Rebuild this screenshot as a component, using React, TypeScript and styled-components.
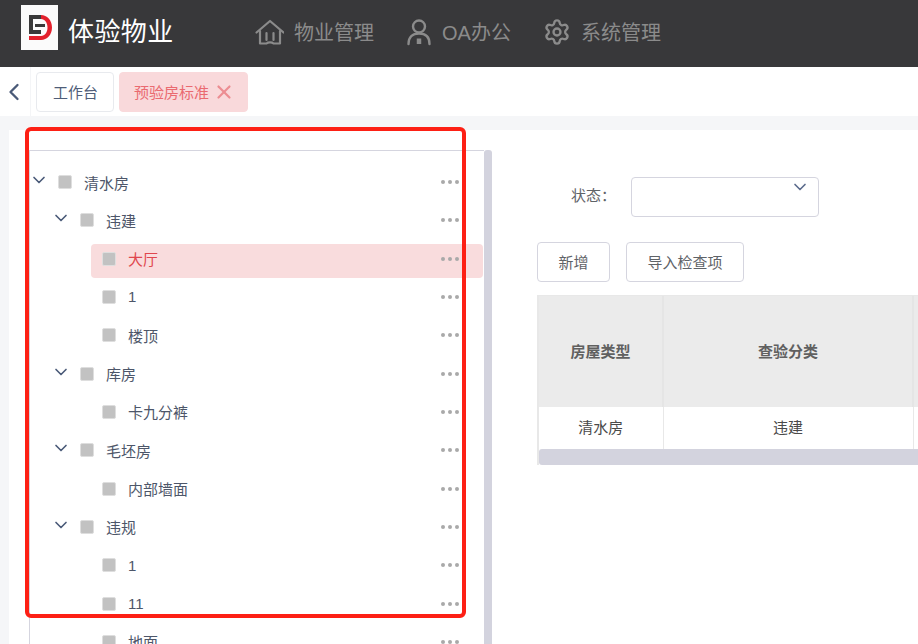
import React from 'react';
import styled, { createGlobalStyle } from 'styled-components';
import { ChevronDown, ChevronLeft, Settings, X } from 'lucide-react';

const GlobalStyle = createGlobalStyle`
  html, body {
    margin: 0;
    padding: 0;
    height: 100%;
    overflow: hidden;
    background: #fff;
    font-family: "Liberation Sans", "Noto Sans CJK SC", sans-serif;
  }
  * { box-sizing: border-box; }
`;

const treeData: TreeRow[] = [
  { label: '清水房', level: 0, open: true },
  { label: '违建', level: 1, open: true },
  { label: '大厅', level: 2, active: true },
  { label: '1', level: 2 },
  { label: '楼顶', level: 2 },
  { label: '库房', level: 1, open: true },
  { label: '卡九分裤', level: 2 },
  { label: '毛坯房', level: 1, open: true },
  { label: '内部墙面', level: 2 },
  { label: '违规', level: 1, open: true },
  { label: '1', level: 2 },
  { label: '11', level: 2 },
  { label: '地面', level: 2 },
];

const HomeIcon = () => (
  <svg width="30" height="28" viewBox="0 0 30 28" fill="none" stroke="#8b8b8b" strokeWidth="2.2" strokeLinejoin="round" strokeLinecap="round">
    <path d="M2.500 14.500 16 3l13.500 11.500" />
    <path d="M6 13v12.500h6.500c1.500-1.500 5.500-1.500 7 0H26V13" />
    <path d="M12.500 15v7M19.500 15v7" />
  </svg>
);

const UserIcon = () => (
  <svg width="26" height="28" viewBox="0 0 26 28" fill="none" stroke="#8b8b8b" strokeWidth="2.4" strokeLinecap="round">
    <circle cx="13" cy="8.500" r="6" />
    <path d="M2.500 26c0-7 4-10.500 10.500-10.500S23.500 19 23.500 26" />
    <path d="M13 20.500V26" strokeWidth="4.500" strokeLinecap="butt" />
  </svg>
);

const Logo = () => (
  <svg width="37" height="45" viewBox="0 0 37 45">
    <rect width="37" height="45" fill="#fbfbfb" />
    <path d="M8 10h12v4h-8v11h8v4H8z" fill="#3a3a3a" />
    <path d="M14 19h10v3H14z" fill="#3a3a3a" />
    <path d="M20 10c6 0 11 5 11 12.500S26 35 20 35H8v-4h12c4 0 6.500-4 6.500-8.500S24 14 20 14z" fill="#e3202c" />
  </svg>
);

const MoreDots = () => (
  <Dots>
    <i />
    <i />
    <i />
  </Dots>
);

const App = () => {
  return (
    <Page>
      <GlobalStyle />
      <Header>
        <LogoBox>
          <Logo />
        </LogoBox>
        <Brand>体验物业</Brand>
        <Nav>
          <NavItem>
            <HomeIcon />
            <span>物业管理</span>
          </NavItem>
          <NavItem>
            <UserIcon />
            <span>OA办公</span>
          </NavItem>
          <NavItem>
            <Settings size={28} color="#8b8b8b" strokeWidth={2} />
            <span>系统管理</span>
          </NavItem>
        </Nav>
      </Header>
      <TabBar>
        <BackButton>
          <ChevronLeft size={28} color="#4a5a78" strokeWidth={2} />
        </BackButton>
        <TabList>
          <Tab>工作台</Tab>
          <Tab $active>
            预验房标准
            <X size={22} color="#ec8d92" strokeWidth={2.4} />
          </Tab>
        </TabList>
      </TabBar>
      <Content>
        <Panel>
          <TreePane>
            <Tree>
              {treeData.map((row, index) => (
                <Row key={index} $level={row.level} $active={row.active}>
                  {row.open && (
                    <Caret>
                      <ChevronDown size={20} color="#4a5a78" strokeWidth={2} />
                    </Caret>
                  )}
                  <Check />
                  <RowLabel $active={row.active}>{row.label}</RowLabel>
                  <MoreDots />
                </Row>
              ))}
            </Tree>
            <TreeScroll />
          </TreePane>
          <Detail>
            <FilterRow>
              <FilterLabel>状态：</FilterLabel>
              <SelectBox>
                <ChevronDown size={20} color="#5b6b8c" strokeWidth={2} />
              </SelectBox>
            </FilterRow>
            <Actions>
              <ActionButton>新增</ActionButton>
              <ActionButton $wide>导入检查项</ActionButton>
            </Actions>
            <TableWrap>
              <Table>
                <colgroup>
                  <col width="124" />
                  <col width="250" />
                  <col />
                </colgroup>
                <thead>
                  <tr>
                    <HeadCell>房屋类型</HeadCell>
                    <HeadCell>查验分类</HeadCell>
                    <HeadCell />
                  </tr>
                </thead>
                <tbody>
                  <tr>
                    <BodyCell>清水房</BodyCell>
                    <BodyCell>违建</BodyCell>
                    <BodyCell />
                  </tr>
                </tbody>
              </Table>
              <TableScroll />
            </TableWrap>
          </Detail>
        </Panel>
      </Content>
      <Marker />
    </Page>
  );
};

export default App;

const Page = styled.div`
  position: relative;
  width: 918px;
  height: 644px;
  overflow: hidden;
  display: flex;
  flex-direction: column;
`;

const Header = styled.header`
  height: 67px;
  flex: none;
  background: #38383a;
  display: flex;
  align-items: flex-start;
  padding: 5px 0 0 21px;
`;

const LogoBox = styled.div`
  width: 37px;
  height: 45px;
  flex: none;
`;

const Brand = styled.div`
  margin: 8px 0 0 10px;
  width: 106px;
  font-size: 26px;
  line-height: 38px;
  letter-spacing: 0.4px;
  color: #fff;
  white-space: nowrap;
`;

const Nav = styled.nav`
  display: flex;
  margin: 13px 0 0 80px;
  gap: 32px;
`;

const NavItem = styled.div`
  display: flex;
  align-items: center;
  gap: 10px;
  height: 28px;
  font-size: 20px;
  color: #8b8b8b;
  white-space: nowrap;
  span {
    margin-bottom: 2px;
  }
`;

const TabBar = styled.div`
  height: 49px;
  flex: none;
  display: flex;
  background: #fff;
`;

const BackButton = styled.div`
  width: 31px;
  height: 49px;
  background: #fff;
  border-right: 1px solid #f4f5f7;
  display: flex;
  align-items: center;
`;

const TabList = styled.div`
  display: flex;
  gap: 5px;
  padding: 5px 0 0 5px;
`;

const Tab = styled.div<{ $active?: boolean }>`
  height: 40px;
  padding: ${(p) => (p.$active ? '0 12px 2px 14px' : '0 15px 2px 16px')};
  display: flex;
  align-items: center;
  gap: 4px;
  border-radius: 4px;
  font-size: 15px;
  white-space: nowrap;
  border: 1px solid ${(p) => (p.$active ? '#f9d9db' : '#e8eaee')};
  background: ${(p) => (p.$active ? '#f9d9db' : '#fff')};
  color: ${(p) => (p.$active ? '#ea6a70' : '#4f5d78')};
  svg {
    margin-bottom: -1px;
  }
`;

const Content = styled.main`
  flex: 1;
  min-height: 0;
  background: #f5f6f8;
  padding: 14px 0 0 9px;
`;

const Panel = styled.section`
  height: 100%;
  background: #fff;
  display: flex;
  padding: 20px 0 0 20px;
`;

const TreePane = styled.div`
  width: 463px;
  flex: none;
  display: flex;
  height: 600px;
`;

const Tree = styled.div`
  width: 455px;
  border-top: 1px solid #d5d5df;
  border-left: 1px solid #d5d5df;
  padding-top: 16px;
`;

const TreeScroll = styled.div`
  width: 8px;
  background: #d3d3de;
  border-radius: 3px 3px 0 0;
`;

const Row = styled.div<{ $level: number; $active?: boolean }>`
  height: 34px;
  margin: 0 1px 4.33px ${(p) => (p.$level === 2 ? 61 : 0)}px;
  padding-left: ${(p) => (p.$level === 2 ? 11 : p.$level * 22)}px;
  display: flex;
  align-items: center;
  border-radius: 4px;
  background: ${(p) => (p.$active ? '#f9dcdd' : 'transparent')};
`;

const Caret = styled.span`
  width: 28px;
  height: 20px;
  flex: none;
  margin-top: -8px;
  svg {
    display: block;
    margin-left: -1px;
  }
`;

const Check = styled.span`
  width: 14px;
  height: 14px;
  flex: none;
  margin-top: -4px;
  background: #c2c2c2;
  border: 1px solid #dedede;
  border-radius: 2px;
`;

const RowLabel = styled.span<{ $active?: boolean }>`
  margin: -4px 0 0 12px;
  font-size: 15px;
  color: ${(p) => (p.$active ? '#e0474e' : '#4d5669')};
  white-space: nowrap;
`;

const Dots = styled.span`
  margin: -4px 24px 0 auto;
  display: flex;
  gap: 3px;
  i {
    width: 4px;
    height: 4px;
    border-radius: 50%;
    background: #a9a9a9;
  }
`;

const Detail = styled.div`
  flex: 1;
  min-width: 0;
  padding: 27px 0 0 45px;
`;

const FilterRow = styled.div`
  display: flex;
  align-items: center;
  height: 40px;
`;

const FilterLabel = styled.label`
  width: 94px;
  padding: 0 0 5px 34px;
  font-size: 15px;
  color: #5f6368;
  white-space: nowrap;
`;

const SelectBox = styled.div`
  width: 188px;
  height: 40px;
  border: 1px solid #d5d5df;
  border-radius: 4px;
  padding-left: 158px;
  svg {
    display: block;
    margin-top: -1px;
  }
`;

const Actions = styled.div`
  display: flex;
  gap: 16px;
  margin-top: 25px;
`;

const ActionButton = styled.button<{ $wide?: boolean }>`
  width: ${(p) => (p.$wide ? 118 : 73)}px;
  height: 40px;
  padding: 0 0 2px;
  background: #fff;
  border: 1px solid #d5d5df;
  border-radius: 4px;
  font: inherit;
  font-size: 15px;
  color: #5f6368;
`;

const TableWrap = styled.div`
  margin-top: 13px;
  border-left: 2px solid #e8e8e8;
  border-top: 1px solid #e8e8e8;
  width: 500px;
`;

const Table = styled.table`
  width: 100%;
  table-layout: fixed;
  border-collapse: collapse;
`;

const HeadCell = styled.th`
  height: 111px;
  padding: 0 0 3px;
  background: #ebebeb;
  border-right: 2px solid #e5e5e5;
  font-size: 15px;
  font-weight: 700;
  color: #606060;
`;

const BodyCell = styled.td`
  height: 42px;
  padding: 0 0 3px;
  text-align: center;
  border-right: 1px solid #e8e8e8;
  font-size: 15px;
  color: #4a4a4a;
`;

const TableScroll = styled.div`
  height: 16px;
  background: #d3d3de;
  border-radius: 3px 0 0 3px;
`;

const Marker = styled.div`
  position: absolute;
  left: 25px;
  top: 127px;
  width: 441px;
  height: 491px;
  border: 4px solid #fd2015;
  border-radius: 6px;
  pointer-events: none;
`;

interface TreeRow {
  label: string;
  level: number;
  open?: boolean;
  active?: boolean;
}
